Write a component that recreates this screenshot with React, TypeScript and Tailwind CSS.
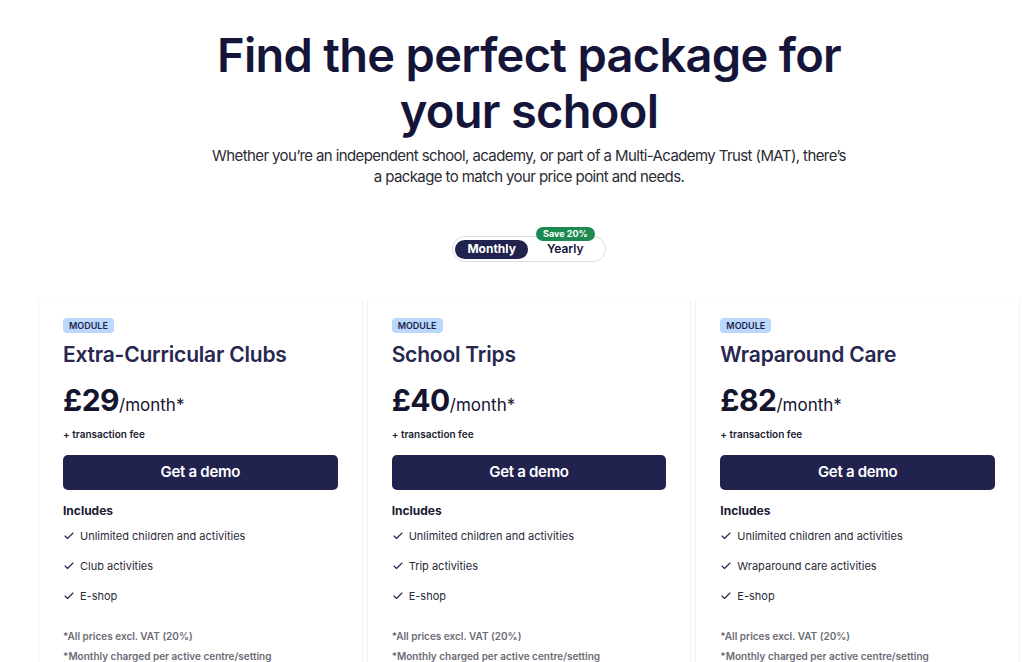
import { Check } from 'lucide-react'

type Plan = {
  name: string
  price: string
  feature: string
}

const plans: Plan[] = [
  { name: 'Extra-Curricular Clubs', price: '£29', feature: 'Club activities' },
  { name: 'School Trips', price: '£40', feature: 'Trip activities' },
  { name: 'Wraparound Care', price: '£82', feature: 'Wraparound care activities' },
]

function PlanCard({ plan }: { plan: Plan }) {
  return (
    <div className="flex flex-col border border-[#f2f2f4] border-t-[#fafafb] bg-white px-6 pt-[18px] pb-6">
      <span className="self-start rounded-[4px] bg-[#b9d8fb] px-[6px] py-[2px] text-[9px] font-semibold uppercase leading-[11px] text-[#1f1f4a]">
        Module
      </span>
      <h3 className="mt-[9px] text-[21px] font-semibold leading-[26px] tracking-[-0.2px] text-[#26264f]">
        {plan.name}
      </h3>
      <p className="mt-[15px] flex items-baseline text-[#14142e]">
        <span className="text-[30px] font-bold leading-[34px] tracking-[-0.5px]">{plan.price}</span>
        <span className="text-[17px] leading-[34px]">/month*</span>
      </p>
      <p className="mt-[5px] text-[10px] font-semibold leading-[14px] text-[#1a1a30]">
        + transaction fee
      </p>
      <button
        type="button"
        className="mt-[14px] h-[35px] w-full rounded-[5px] bg-[#22224f] text-[15px] font-semibold tracking-[-0.3px] text-white"
      >
        Get a demo
      </button>
      <p className="mt-[13px] text-[12px] font-bold leading-[16px] text-[#1a1a30]">Includes</p>
      <ul className="mt-[9px] flex flex-col gap-[14px] text-[11px] leading-[16px] text-[#2a2a3a]">
        {['Unlimited children and activities', plan.feature, 'E-shop'].map((item) => (
          <li key={item} className="flex items-center gap-[5px]">
            <Check className="h-3 w-3 text-[#22224f]" strokeWidth={2.2} />
            {item}
          </li>
        ))}
      </ul>
      <div className="mt-[25px] flex flex-col gap-[6px] text-[10px] font-semibold leading-[14px] text-[#6b6b75]">
        <p>*All prices excl. VAT (20%)</p>
        <p>*Monthly charged per active centre/setting</p>
      </div>
    </div>
  )
}

export default function App() {
  return (
    <div className="h-[662px] w-[1024px] overflow-hidden bg-white font-['Inter',sans-serif]">
      <div className="flex w-[1058px] flex-col items-center">
        <h1 className="mt-[27px] max-w-[700px] text-center text-[47px] font-semibold leading-[56px] tracking-[-0.7px] text-[#15153a]">
          Find the perfect package for your school
        </h1>
        <p className="mt-[6px] max-w-[640px] text-center text-[15px] leading-[21px] tracking-[-0.6px] text-[#2b2b33]">
          Whether you’re an independent school, academy, or part of a Multi-Academy Trust (MAT), there’s a
          package to match your price point and needs.
        </p>

        <div className="relative mt-[49px] flex h-[26px] items-center rounded-full border border-[#dcdce2] bg-white p-[2px]">
          <span className="flex h-[19px] items-center rounded-full bg-[#22224f] px-[12px] text-[12px] font-bold text-white">
            Monthly
          </span>
          <span className="flex h-[19px] items-center px-[19px] text-[12px] font-semibold text-[#15153a]">
            Yearly
          </span>
          <span className="absolute -top-[10px] right-[10px] rounded-full bg-[#1d8a52] px-[7px] py-[2px] text-[9px] font-bold leading-[10px] text-white">
            Save 20%
          </span>
        </div>

        <div className="mt-[37px] grid w-full grid-cols-3 gap-1 px-[38px]">
          {plans.map((plan) => (
            <PlanCard key={plan.name} plan={plan} />
          ))}
        </div>
      </div>
    </div>
  )
}
